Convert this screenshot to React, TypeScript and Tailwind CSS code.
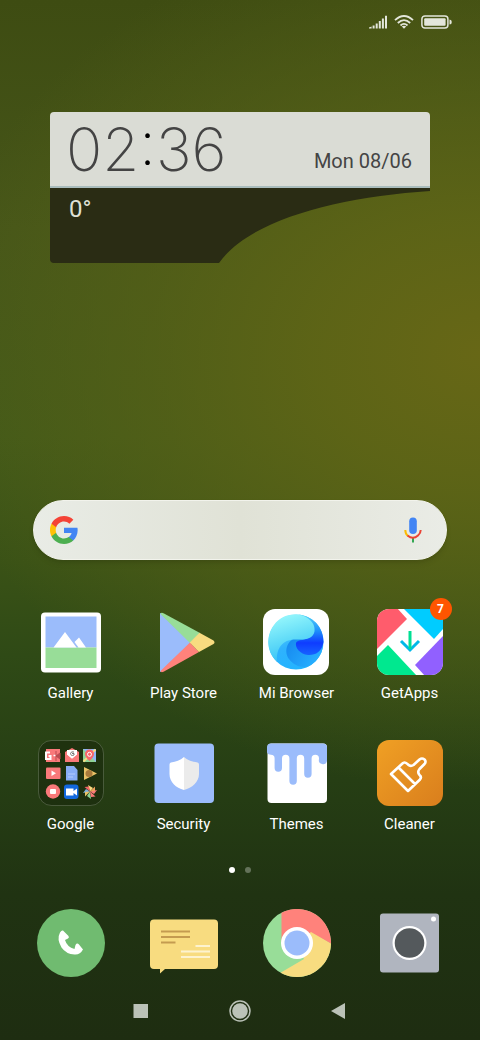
import { useState } from 'react';
import type { ReactNode } from 'react';

interface AppItem {
  id: string;
  label: string;
  icon: ReactNode;
  badge?: number;
}

function Icon({ children }: { children: ReactNode }) {
  return (
    <svg viewBox="0 0 68 68" className="block h-[68px] w-[68px]" aria-hidden="true">
      {children}
    </svg>
  );
}

const galleryIcon = (
  <Icon>
    <rect x="4" y="4.500" width="60" height="60" rx="4" fill="#fff" />
    <rect x="8.500" y="8.500" width="51" height="31" fill="#9bbcfb" />
    <rect x="8.500" y="39.500" width="51" height="20.500" fill="#98dd98" />
    <path d="M16.500 39.500 28 24 39.500 39.500ZM37.500 34 42 29.500 49 39.500H41.500Z" fill="#fff" />
  </Icon>
);

const playIcon = (
  <Icon>
    <path d="M10.5 5.5V63.5L41 34.5Z" fill="#9bbcfb" stroke="#9bbcfb" strokeLinejoin="round" />
    <path d="M10.5 6Q11 4 14 5.500L50 25 40 35Z" fill="#98dd98" />
    <path d="M10.500 63Q11 65 14 63.500L49 44 40 34.500Z" fill="#ff827b" />
    <path d="M49.500 24.700 63.500 32.500Q65.500 34.500 63.500 36L49 44 39.800 34.600Z" fill="#f8dc80" />
  </Icon>
);

const browserIcon = (
  <Icon>
    <defs>
      <linearGradient id="mbBase" x1="0.2" y1="0" x2="0.6" y2="1">
        <stop offset="0" stopColor="#6fe6fa" />
        <stop offset="0.55" stopColor="#2fb2fd" />
        <stop offset="1" stopColor="#22b4ff" />
      </linearGradient>
      <linearGradient id="mbTop" x1="0.3" y1="0" x2="0.6" y2="1">
        <stop offset="0" stopColor="#98f8fc" />
        <stop offset="0.5" stopColor="#62dcf8" />
        <stop offset="1" stopColor="#2fbdf8" />
      </linearGradient>
      <linearGradient id="mbRight" x1="0.5" y1="0" x2="0.5" y2="1">
        <stop offset="0" stopColor="#52d4f8" />
        <stop offset="0.4" stopColor="#1d90fb" />
        <stop offset="0.7" stopColor="#0f3cff" />
        <stop offset="1" stopColor="#1663ff" />
      </linearGradient>
      <linearGradient id="mbMid" x1="0" y1="0" x2="1" y2="0.5">
        <stop offset="0" stopColor="#1586ee" />
        <stop offset="1" stopColor="#27b0ff" />
      </linearGradient>
    </defs>
    <rect x="1" y="1" width="66" height="66" rx="12" fill="#fff" />
    <g transform="translate(1 1)">
      <circle cx="33" cy="33" r="27.500" fill="url(#mbBase)" />
      <path d="M35 29C25 29 20 42 26 50C31 57 39 59 45 57.500C54 53 59 45 60 37L46 32Z" fill="url(#mbMid)" />
      <path d="M35 5.600C50 7 60.500 18 60.500 33C59 43 52 46.500 45 46C37 45 32 39 33 34C34 30 43 32 48 27C54 20 48 9 35 5.600Z" fill="url(#mbRight)" />
      <path d="M31 5.600C44 5 53 14 51.500 22.500C50 30 42 31 33 30.500C20 30 13 39 14 52.500C3 43 3 26 11 16C16 9 23 6 31 5.600Z" fill="url(#mbTop)" />
    </g>
  </Icon>
);

const getAppsIcon = (
  <Icon>
    <defs>
      <clipPath id="gaClip">
        <rect x="1" y="1" width="66" height="66" rx="12" />
      </clipPath>
    </defs>
    <g clipPath="url(#gaClip)">
      <rect width="68" height="68" fill="#fff" />
      <path d="M0 0H21L31 11 0 42Z" fill="#ff5c6c" />
      <path d="M27 0H68V20L58 31Z" fill="#00ccff" />
      <path d="M68 27V68H49L39 57Z" fill="#9160ff" />
      <path d="M0 49 12 37 41 68H0Z" fill="#00e88f" />
      <path d="M25 33 34 42 43 33" fill="none" stroke="#00b8e8" strokeWidth="3" />
      <path d="M34 23V41" stroke="#00df93" strokeWidth="3" />
    </g>
  </Icon>
);

const googleFolderIcon = (
  <Icon>
    <rect x="1.500" y="1.500" width="65" height="65" rx="13" fill="#17260b" fillOpacity="0.550" stroke="#fff" strokeOpacity="0.180" />
    <rect x="9" y="10" width="14" height="13" fill="#f9797a" />
    <path d="M13 13.500H9V20H13.500V17H11.500" fill="none" stroke="#fff" strokeWidth="2" />
    <path d="M16.500 16.500H19" stroke="#fff" strokeWidth="1.500" />
    <path d="M19 12V22M19 17L23 14V20Z" fill="#b94c50" stroke="#b94c50" />
    <path d="M28 13 35 9 42 13V22H28Z" fill="#f9797a" />
    <path d="M30 11H40V16L35 20 30 16Z" fill="#fff" />
    <path d="M28 23V14L35 20 42 14V23Z" fill="#f9797a" />
    <path d="M37 13Q34 12 33.500 14.500Q34 17.500 37 16V14.500H35" fill="none" stroke="#777" />
    <rect x="46" y="10" width="13" height="13" fill="#8fd395" />
    <path d="M59 10V23L46 10Z" fill="#8fb5f5" />
    <path d="M46.500 22.500 58.500 10.500" stroke="#f8dc80" strokeWidth="2" />
    <path d="M52.500 22Q48 18 48 15A4.500 4.500 0 0 1 57 15Q57 18 52.500 22Z" fill="#f9666a" />
    <circle cx="52.500" cy="15.300" r="2" fill="none" stroke="#fff" />
    <rect x="9" y="28.500" width="14.500" height="11.500" rx="1" fill="#f9797a" />
    <path d="M14.500 31.500V37L19 34.200Z" fill="#fff" />
    <path d="M29 27H37L40.500 31V41.500H29Z" fill="#88adf5" />
    <path d="M31 35H38M31 38H36" stroke="#b4cbfc" />
    <path d="M47 28 60 34.500 47 41Z" fill="#e9c267" />
    <circle cx="52" cy="34.500" r="3.500" fill="#a97a3c" />
    <circle cx="16" cy="52.500" r="7.200" fill="#f9797a" />
    <rect x="13" y="50" width="6" height="5" rx="1" fill="#fff" />
    <rect x="27" y="45.500" width="14.500" height="14.500" rx="3" fill="#1268dd" />
    <path d="M29 49.500H36.500V52L40 49.500V56.500L36.500 54V56.500H29Z" fill="#fff" />
    <path d="M53 52.500 51 46 56 49Z" fill="#f8dc80" />
    <path d="M53 52.500 60 51 57 55Z" fill="#f9797a" />
    <path d="M53 52.500 54 60 50 57Z" fill="#8fd395" />
    <path d="M53 52.500 46 54 49 50Z" fill="#7fb0dd" />
    <path d="M53 52.500 47.500 48 52 47.500Z" fill="#f06568" />
    <path d="M53 52.500 58 47.500V52Z" fill="#f2a05e" />
    <path d="M53 52.500 58.500 57.500 54 58Z" fill="#f9797a" />
    <path d="M53 52.500 48 57.500V53Z" fill="#e9c267" />
  </Icon>
);

const securityIcon = (
  <Icon>
    <rect x="4.500" y="4.500" width="59.500" height="59.500" rx="4" fill="#9bbcfb" />
    <path d="M34 18C30 21.500 26 22.500 21 23.500Q19.500 24 19.500 25.500V35C19.500 43 26 49 34 51Z" fill="#fff" />
    <path d="M34 18C38 21.500 42 22.500 47.500 23.500Q49 24 49 25.500V35C49 43 42 49 34 51Z" fill="#ebebeb" />
  </Icon>
);

const themesIcon = (
  <Icon>
    <rect x="4.500" y="4.500" width="59.500" height="59.500" rx="4" fill="#fff" />
    <path
      d="M4 8.500Q4 4.500 8 4.500H60Q64 4.500 64 8.500V22A4 4 0 0 1 56 20V19.500A3.700 3.700 0 0 0 48.600 19.500V35A3.700 3.700 0 0 1 41.200 35V19.500A3.700 3.700 0 0 0 33.800 19.500V42A3.700 3.700 0 0 1 26.400 42V19.500A3.700 3.700 0 0 0 19 19.500V29A3.700 3.700 0 0 1 11.600 29V19.500A3.700 3.700 0 0 0 8 15.800Q5 15.800 4 13.500Z"
      fill="#9bbcfb"
    />
  </Icon>
);

const cleanerIcon = (
  <Icon>
    <defs>
      <linearGradient id="clBg" x1="0" y1="0" x2="1" y2="1">
        <stop offset="0" stopColor="#f0a024" />
        <stop offset="1" stopColor="#d97e1d" />
      </linearGradient>
    </defs>
    <rect x="1" y="1" width="66" height="66" rx="12" fill="url(#clBg)" />
    <path
      d="M15 35 32 52 44 40.500Q46 38 43.500 36Q41 33 43.500 30L48.500 25Q50.500 22.500 48.500 20.500Q46 18.500 43.500 20.500L37.500 26Q34.500 28 32 25.500Q29.500 22.500 27 24ZM22.500 28.500 39 45"
      fill="none"
      stroke="#fff"
      strokeWidth="2.600"
      strokeLinejoin="round"
    />
  </Icon>
);

const phoneIcon = (
  <Icon>
    <circle cx="34" cy="34" r="34" fill="#70bb70" />
    <path
      d="M26 21.500 31.500 27Q32.500 28.500 31 29.500L28 31Q30 38 37.500 40L38.500 36Q40 33.500 42 35.500L46 40.500Q43 46 37.500 45.500Q29 45 24.500 38.500Q19.500 30 23 23.500Q24.500 21 26 21.500Z"
      fill="#fff"
    />
  </Icon>
);

const messagesIcon = (
  <Icon>
    <path d="M4 10.500H64Q68 10.500 68 14.500V56Q68 60 64 60H15L10 64.500V60H4Q0 60 0 56V14.500Q0 10.500 4 10.500Z" fill="#f8dc80" />
    <path d="M11 22.500H40M11 28H40M11 33.500H25.500" stroke="#c49b50" strokeWidth="2" />
    <path d="M45.500 37H60M31 42.500H60M31 48H60" stroke="#fdf3cf" strokeWidth="2" />
  </Icon>
);

const chromeIcon = (
  <Icon>
    <circle cx="34" cy="34" r="34" fill="#98dd98" />
    <path d="M68 34.500A34 34 0 0 1 17.500 63.700L41 50 34 34 48 22Z" fill="#f8dc80" />
    <path d="M18.500 3.700A34 34 0 0 1 68 34.500L48 23 34 34H18.500Z" fill="#ff827b" />
    <circle cx="34" cy="34" r="16" fill="#fff" />
    <circle cx="34" cy="34" r="12.500" fill="#9bbcfb" />
  </Icon>
);

const cameraIcon = (
  <Icon>
    <rect x="4" y="4.500" width="59" height="59" rx="3" fill="#b0b5bf" />
    <circle cx="33.500" cy="34" r="17" fill="#fff" />
    <circle cx="33.500" cy="34" r="14.800" fill="#54595c" />
    <circle cx="57.500" cy="10" r="2.500" fill="#fff" />
  </Icon>
);

const homeApps: AppItem[] = [
  { id: 'gallery', label: 'Gallery', icon: galleryIcon },
  { id: 'play', label: 'Play Store', icon: playIcon },
  { id: 'browser', label: 'Mi Browser', icon: browserIcon },
  { id: 'getapps', label: 'GetApps', icon: getAppsIcon, badge: 7 },
  { id: 'google', label: 'Google', icon: googleFolderIcon },
  { id: 'security', label: 'Security', icon: securityIcon },
  { id: 'themes', label: 'Themes', icon: themesIcon },
  { id: 'cleaner', label: 'Cleaner', icon: cleanerIcon },
];

const dockApps: AppItem[] = [
  { id: 'phone', label: 'Phone', icon: phoneIcon },
  { id: 'messages', label: 'Messages', icon: messagesIcon },
  { id: 'chrome', label: 'Chrome', icon: chromeIcon },
  { id: 'camera', label: 'Camera', icon: cameraIcon },
];

function StatusBar() {
  return (
    <header className="flex h-11 items-center justify-end gap-[7px] pr-7 text-[#e3e6db]">
      <svg viewBox="0 0 18 14" className="h-[14px] w-[18px]" fill="currentColor" aria-hidden="true">
        <path d="M0 13.500V12.500L2.600 11.500V13.500ZM3.600 10.500H5.600V13.500H3.600ZM6.700 8.500H8.700V13.500H6.700ZM9.800 6H11.800V13.500H9.800ZM12.900 3.500H14.900V13.500H12.900ZM16 .8H18V13.500H16Z" />
      </svg>
      <svg viewBox="0 0 20 14" className="h-[14px] w-5" fill="none" stroke="currentColor" strokeWidth="1.800" aria-hidden="true">
        <path d="M1 5.200Q10-3.200 19 5.200M3.800 8Q10 2.200 16.200 8M6.500 10.500Q10 7.200 13.500 10.500" />
        <path d="M7.800 11.500Q10 9.800 12.200 11.500L10 13.800Z" fill="currentColor" stroke="none" />
      </svg>
      <svg viewBox="0 0 31 14" className="h-[14px] w-[31px]" aria-hidden="true">
        <rect x="0.900" y="0.900" width="26" height="12.200" rx="3" fill="none" stroke="currentColor" strokeWidth="1.500" />
        <rect x="3.200" y="3.200" width="21.400" height="7.600" rx="1" fill="currentColor" />
        <path d="M28.500 4.500Q30.800 4.500 30.800 7T28.500 9.500Z" fill="currentColor" />
      </svg>
    </header>
  );
}

function ClockWidget() {
  return (
    <section className="mx-[50px] mt-[68px]">
      <div className="flex h-[76px] items-end justify-between rounded-t-[4px] border-b-2 border-[#a9bcbc] bg-[#dadcd5] pr-[18px] pl-4">
        <time className="font-[Inter,sans-serif] text-[60px] leading-[74px] font-extralight text-[#444]">
          02<span className="text-black">:</span>36
        </time>
        <p className="pb-[11px] text-xl leading-7 text-[#444]">Mon 08/06</p>
      </div>
      <div className="relative h-[75px]">
        <svg viewBox="0 0 380 75" preserveAspectRatio="none" className="absolute inset-0 h-full w-full" aria-hidden="true">
          <path d="M0 0H380V3C290 9 200 31 169 75H4Q0 75 0 71Z" fill="#2a2c14" />
        </svg>
        <p className="relative pt-[7px] pl-[19px] text-2xl leading-7 text-[#dfe1d6]">0°</p>
      </div>
    </section>
  );
}

function SearchBar() {
  const [query, setQuery] = useState('');

  return (
    <form
      role="search"
      onSubmit={(e) => e.preventDefault()}
      className="mx-[33px] flex h-[60px] items-center rounded-full border border-[#f2f3ec] bg-linear-to-r from-[#e9ece6] via-[#e0e2d6] to-[#eaece6] px-4 shadow-md"
    >
      <svg viewBox="0 0 24 24" className="h-7 w-7 shrink-0" aria-hidden="true">
        <path fill="#4285f4" d="M23.700 12.270c0-.79-.07-1.540-.19-2.270H12v4.510h6.470c-.29 1.480-1.140 2.730-2.400 3.580v3h3.860c2.260-2.090 3.770-5.170 3.770-8.820z" />
        <path fill="#4caf50" d="M12 24c3.240 0 5.950-1.080 7.930-2.910l-3.860-3c-1.080.72-2.450 1.160-4.070 1.160-3.130 0-5.780-2.110-6.730-4.960H1.290v3.090C3.260 21.300 7.310 24 12 24z" />
        <path fill="#ffc107" d="M5.270 14.290c-.25-.72-.38-1.490-.38-2.290s.14-1.570.38-2.290V6.620H1.290C.47 8.240 0 10.060 0 12s.47 3.760 1.290 5.380l3.980-3.090z" />
        <path fill="#f44336" d="M12 4.750c1.770 0 3.350.61 4.600 1.800l3.420-3.420C17.950 1.190 15.240 0 12 0 7.310 0 3.260 2.700 1.290 6.620l3.980 3.090C6.220 6.860 8.870 4.750 12 4.750z" />
      </svg>
      <input
        type="text"
        aria-label="Search"
        value={query}
        onChange={(e) => setQuery(e.target.value)}
        className="h-full min-w-0 flex-1 bg-transparent px-4 text-lg text-[#333] outline-none"
      />
      <button type="button" aria-label="Voice search" className="flex w-[34px] shrink-0 justify-center">
        <svg viewBox="0 0 18 26" className="h-[26px] w-[18px]" fill="none" aria-hidden="true">
          <rect x="5.200" y="0.500" width="7.600" height="16.500" rx="3.800" fill="#4285f4" />
          <path d="M9 20.500V25.500" stroke="#34a853" strokeWidth="2" />
          <path d="M1.300 13Q1.300 17 4 19" stroke="#fbbc04" strokeWidth="2" />
          <path d="M3.500 18.500Q9 23 14 18.500Q16.700 16.200 16.700 13" stroke="#ea4335" strokeWidth="2" />
        </svg>
      </button>
    </form>
  );
}

function NavBar() {
  return (
    <nav className="flex h-[58px] items-center justify-center text-[#bbc2b8]">
      <button type="button" aria-label="Recent apps" className="flex w-[99px] justify-center">
        <svg viewBox="0 0 24 24" className="h-6 w-6" aria-hidden="true">
          <rect x="4.500" y="5" width="14.500" height="14" fill="currentColor" />
        </svg>
      </button>
      <button type="button" aria-label="Home" className="flex w-[99px] justify-center">
        <svg viewBox="0 0 24 24" className="h-6 w-6" aria-hidden="true">
          <circle cx="12" cy="12" r="10" fill="none" stroke="currentColor" strokeWidth="1.500" />
          <circle cx="12" cy="12" r="7.800" fill="currentColor" />
        </svg>
      </button>
      <button type="button" aria-label="Back" className="flex w-[99px] justify-center">
        <svg viewBox="0 0 24 24" className="h-6 w-6" aria-hidden="true">
          <path d="M4 12 18 4V20Z" fill="currentColor" />
        </svg>
      </button>
    </nav>
  );
}

export default function App() {
  return (
    <div className="flex min-h-screen flex-col bg-[radial-gradient(ellipse_115%_42%_at_100%_34%,#676716_0%,#5f6516e6_30%,#58621799_60%,transparent_100%),linear-gradient(to_bottom,#3e4c12_0%,#465619_22%,#435a19_42%,#3a5216_54%,#2f4a16_63%,#263e14_75%,#203312_86%,#1e2d11_100%)] font-[Roboto,sans-serif]">
      <StatusBar />
      <ClockWidget />
      <main className="mt-auto">
        <SearchBar />
        <ul className="mt-12 grid grid-cols-4 gap-y-9 px-[14px]">
          {homeApps.map((app) => (
            <li key={app.id} className="flex justify-center">
              <button type="button" className="flex flex-col items-center gap-[7px]">
                <span className="relative">
                  {app.icon}
                  {app.badge && (
                    <span className="absolute -top-[10px] -right-2 flex h-[22px] w-[22px] items-center justify-center rounded-full bg-[#ff5500] text-xs font-bold text-white">
                      {app.badge}
                    </span>
                  )}
                </span>
                <span className="text-[15px] leading-5 whitespace-nowrap text-white">{app.label}</span>
              </button>
            </li>
          ))}
        </ul>

        {/* Page indicator */}
        <div className="mt-[33px] flex justify-center gap-[10px]">
          <span className="h-[6px] w-[6px] rounded-full bg-white" />
          <span className="h-[6px] w-[6px] rounded-full bg-white/30" />
        </div>
      </main>

      {/* Dock */}
      <ul className="mt-9 mb-[5px] grid grid-cols-4 px-[14px]">
        {dockApps.map((app) => (
          <li key={app.id} className="flex justify-center">
            <button type="button" aria-label={app.label}>
              {app.icon}
            </button>
          </li>
        ))}
      </ul>
      <NavBar />
    </div>
  );
}
